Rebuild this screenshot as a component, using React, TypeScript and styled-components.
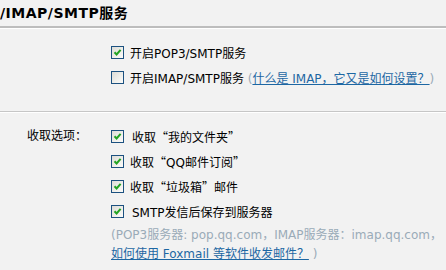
import React from "react";
import styled, { createGlobalStyle } from "styled-components";

const Global = createGlobalStyle`
  html, body { margin: 0; padding: 0; background: #f2f2f2; }
  body {
    font-family: "DejaVu Sans", "Noto Sans CJK SC", sans-serif;
    font-size: 12px;
    color: #000;
    overflow: hidden;
  }
`;

const Page = styled.div`
  width: 446px;
  height: 270px;
  overflow: hidden;
  background: #f2f2f2;
`;

const TitleBar = styled.div`
  height: 26px;
  border-bottom: 2px solid #bdbdbd;
  box-shadow: 0 1px 0 #ffffff;
  overflow: hidden;
  white-space: nowrap;
`;

const Title = styled.h2`
  margin: 0;
  padding-top: 4px;
  font-size: 14px;
  line-height: 18px;
  font-weight: bold;
  letter-spacing: 0.5px;
  font-family: "DejaVu Sans", "Noto Sans CJK SC", sans-serif;
`;

const Section = styled.div<{ $top: number; $bottom: number; $divider?: boolean }>`
  display: grid;
  grid-template-columns: 111px 1fr;
  padding-top: ${(p) => p.$top}px;
  padding-bottom: ${(p) => p.$bottom}px;
  ${(p) =>
    p.$divider
      ? `border-bottom: 1px solid #c6c6c6; box-shadow: 0 1px 0 #ffffff;`
      : ``}
`;

const Label = styled.div`
  padding-left: 27px;
  height: 25px;
  line-height: 25px;
  white-space: nowrap;
`;

const Options = styled.div`
  display: flex;
  flex-direction: column;
`;

const Row = styled.label<{ $indent?: number }>`
  display: flex;
  align-items: center;
  height: 25px;
  white-space: nowrap;
  gap: ${(p) => 6 + (p.$indent || 0)}px;
`;

const Box = styled.span`
  width: 11px;
  height: 11px;
  border: 1px solid #1c5180;
  background: linear-gradient(135deg, #dcdcd6 0%, #f0f0ec 60%, #fbfbfa 100%);
  display: flex;
  align-items: center;
  justify-content: center;
  flex: none;
  margin-top: -1px;
`;

const Q = styled.span`
  font-family: "Noto Sans CJK SC", sans-serif;
`;

const Muted = styled.span`
  color: #9aabb8;
`;

const Link = styled.a`
  color: #1d67a3;
  text-decoration: underline;
  cursor: pointer;
`;

const Note = styled.div`
  padding-top: 2px;
  line-height: 19px;
  white-space: nowrap;
`;

const Check = ({ checked }: { checked: boolean }) => (
  <Box>
    {checked && (
      <svg width="9" height="9" viewBox="0 0 9 9">
        <path d="M1.5 4.2 L3.6 6.4 L7.6 1.8" stroke="#22a322" strokeWidth="2" fill="none" />
      </svg>
    )}
  </Box>
);

export default function App() {
  return (
    <Page>
      <Global />
      <TitleBar>
        <Title>/IMAP/SMTP服务</Title>
      </TitleBar>
      <Section $top={12} $bottom={21} $divider>
        <div />
        <Options>
          <Row>
            <Check checked />
            <span>开启POP3/SMTP服务</span>
          </Row>
          <Row>
            <Check checked={false} />
            <span>
              开启IMAP/SMTP服务 <Muted>(</Muted>
              <Link>什么是 IMAP，它又是如何设置？</Link>
              <Muted>)</Muted>
            </span>
          </Row>
        </Options>
      </Section>
      <Section $top={12} $bottom={0}>
        <Label>收取选项：</Label>
        <Options>
          <Row $indent={2}>
            <Check checked />
            <span>收取<Q>“</Q>我的文件夹<Q>”</Q></span>
          </Row>
          <Row>
            <Check checked />
            <span>收取<Q>“</Q>QQ邮件订阅<Q>”</Q></span>
          </Row>
          <Row>
            <Check checked />
            <span>收取<Q>“</Q>垃圾箱<Q>”</Q>邮件</span>
          </Row>
          <Row $indent={2}>
            <Check checked />
            <span>SMTP发信后保存到服务器</span>
          </Row>
          <Note>
            <Muted>(POP3服务器: pop.qq.com，IMAP服务器：imap.qq.com，</Muted>
            <br />
            <Link>如何使用 Foxmail 等软件收发邮件？</Link>
            <Muted> )</Muted>
          </Note>
        </Options>
      </Section>
    </Page>
  );
}
